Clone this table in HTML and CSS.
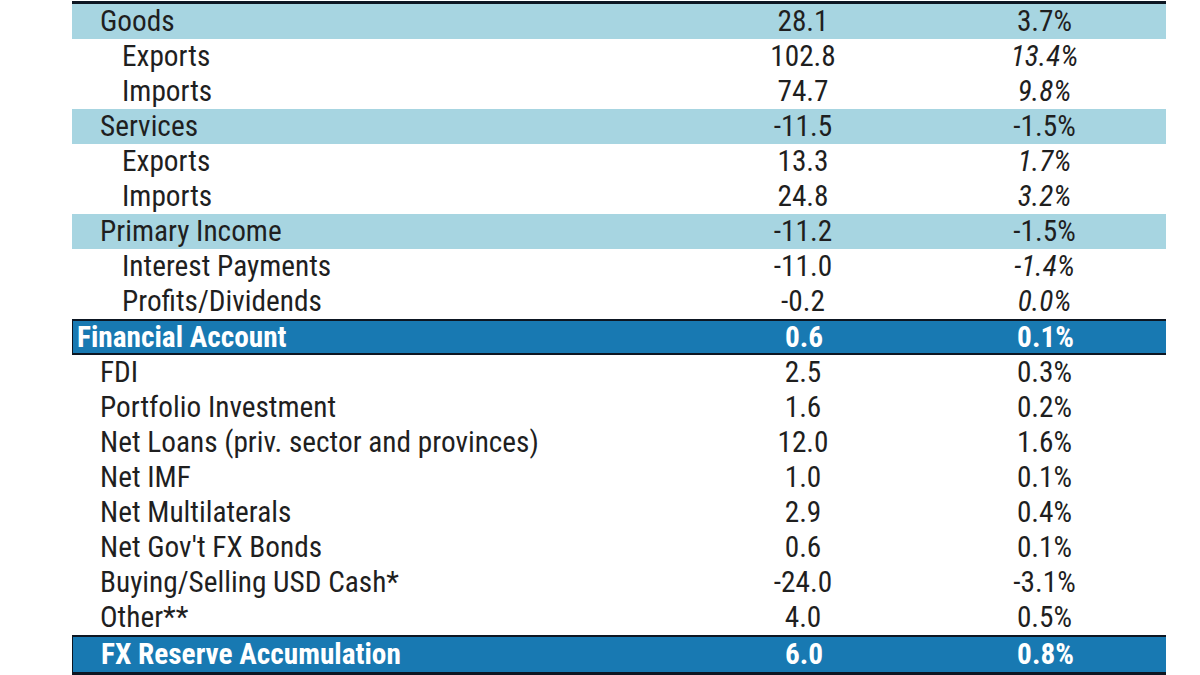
FILE: index.html
```html
<!DOCTYPE html>
<html>
<head>
<meta charset="utf-8">
<link rel="stylesheet" href="styles.css">
</head>
<body>
<div class="table">
  <div class="row sub hl"><div class="lbl l1">Goods</div><div class="num">28.1</div><div class="pct">3.7%</div></div>
  <div class="row"><div class="lbl l2">Exports</div><div class="num">102.8</div><div class="pct it">13.4%</div></div>
  <div class="row"><div class="lbl l2">Imports</div><div class="num">74.7</div><div class="pct it">9.8%</div></div>
  <div class="row hl"><div class="lbl l1">Services</div><div class="num">-11.5</div><div class="pct">-1.5%</div></div>
  <div class="row"><div class="lbl l2">Exports</div><div class="num">13.3</div><div class="pct it">1.7%</div></div>
  <div class="row"><div class="lbl l2">Imports</div><div class="num">24.8</div><div class="pct it">3.2%</div></div>
  <div class="row hl"><div class="lbl l1">Primary Income</div><div class="num">-11.2</div><div class="pct">-1.5%</div></div>
  <div class="row"><div class="lbl l2">Interest Payments</div><div class="num">-11.0</div><div class="pct it">-1.4%</div></div>
  <div class="row"><div class="lbl l2">Profits/Dividends</div><div class="num">-0.2</div><div class="pct it">0.0%</div></div>
  <div class="row total fin"><div class="lbl l0">Financial Account</div><div class="num">0.6</div><div class="pct">0.1%</div></div>
  <div class="row"><div class="lbl l1">FDI</div><div class="num">2.5</div><div class="pct">0.3%</div></div>
  <div class="row"><div class="lbl l1">Portfolio Investment</div><div class="num">1.6</div><div class="pct">0.2%</div></div>
  <div class="row"><div class="lbl l1">Net Loans (priv. sector and provinces)</div><div class="num">12.0</div><div class="pct">1.6%</div></div>
  <div class="row"><div class="lbl l1">Net IMF</div><div class="num">1.0</div><div class="pct">0.1%</div></div>
  <div class="row"><div class="lbl l1">Net Multilaterals</div><div class="num">2.9</div><div class="pct">0.4%</div></div>
  <div class="row"><div class="lbl l1">Net Gov't FX Bonds</div><div class="num">0.6</div><div class="pct">0.1%</div></div>
  <div class="row"><div class="lbl l1">Buying/Selling USD Cash*</div><div class="num">-24.0</div><div class="pct">-3.1%</div></div>
  <div class="row"><div class="lbl l1">Other**</div><div class="num">4.0</div><div class="pct">0.5%</div></div>
  <div class="row total fx"><div class="lbl l1">FX Reserve Accumulation</div><div class="num">6.0</div><div class="pct">0.8%</div></div>
</div>
</body>
</html>
```
FILE: styles.css
```css
html, body {
  margin: 0;
  padding: 0;
  background: #ffffff;
}
body {
  width: 1200px;
  height: 675px;
  overflow: hidden;
  font-family: "Roboto Condensed", Roboto, "Liberation Sans", sans-serif;
  font-stretch: condensed;
  color: #1f1f1f;
}
.table {
  margin: 1px 0 0 72px;
  width: 1094px;
  border-top: 3px solid #0d1622;
}
.row {
  display: grid;
  grid-template-columns: 611px 240px 243px;
  height: 35px;
  align-items: center;
  font-size: 29.3px;
  line-height: 35px;
}
.hl {
  background: #a7d5e1;
}
.lbl { white-space: nowrap; }
.l0 { padding-left: 4px; }
.l1 { padding-left: 28px; }
.l2 { padding-left: 50px; }
.num, .pct { text-align: center; }
.it { font-style: italic; }
.total {
  background: #1879b2;
  color: #ffffff;
  font-weight: bold;
  border-top: 2px solid #0d1622;
  border-left: 1px solid #0d1622;
}
.fin {
  height: 32px;
  line-height: 32px;
  border-bottom: 2px solid #0d1622;
}
.fx {
  height: 35px;
  border-bottom: 3px solid #0d1622;
}
```
